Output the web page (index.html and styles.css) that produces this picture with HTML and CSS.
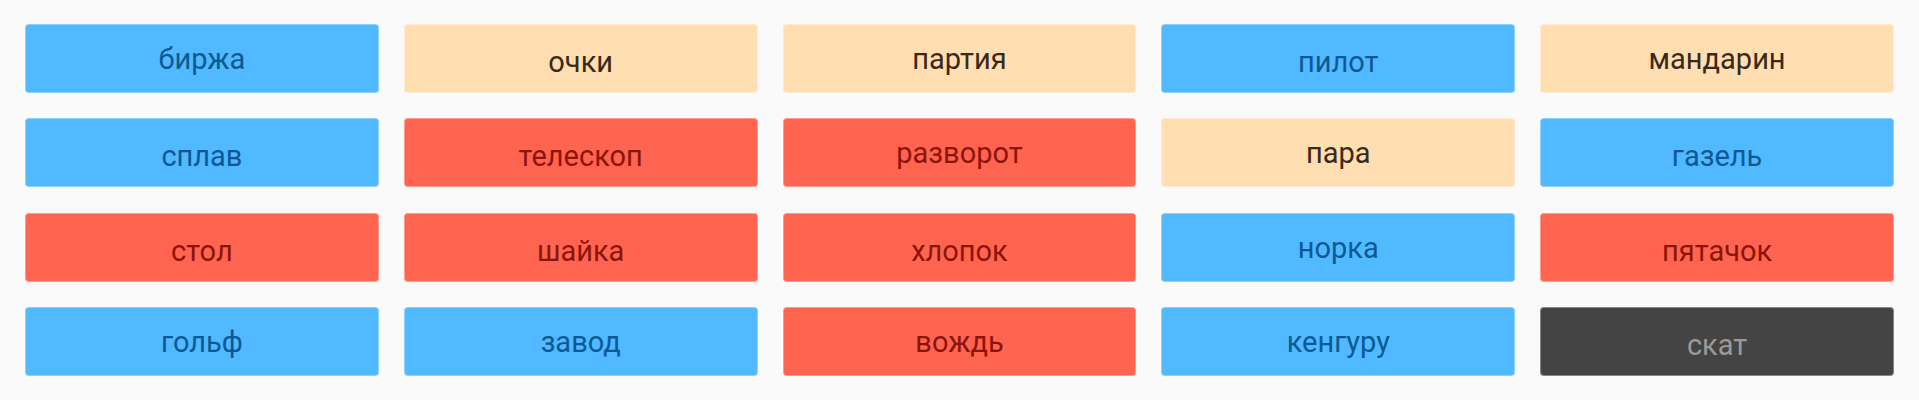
FILE: index.html
```html
<!DOCTYPE html>
<html lang="ru">
<head>
<meta charset="utf-8">
<title>Карточки</title>
<link rel="stylesheet" href="styles.css">
</head>
<body>
<main class="board">
  <div class="card blue d">биржа</div>
  <div class="card beige">очки</div>
  <div class="card beige d">партия</div>
  <div class="card blue">пилот</div>
  <div class="card beige d">мандарин</div>

  <div class="card blue">сплав</div>
  <div class="card red">телескоп</div>
  <div class="card red d">разворот</div>
  <div class="card beige d">пара</div>
  <div class="card blue">газель</div>

  <div class="card red">стол</div>
  <div class="card red">шайка</div>
  <div class="card red">хлопок</div>
  <div class="card blue d">норка</div>
  <div class="card red">пятачок</div>

  <div class="card blue d">гольф</div>
  <div class="card blue d">завод</div>
  <div class="card red d">вождь</div>
  <div class="card blue d">кенгуру</div>
  <div class="card dark">скат</div>
</main>
</body>
</html>
```
FILE: styles.css
```css
html, body {
  margin: 0;
  padding: 0;
  background: #fafafa;
}

body {
  font-family: Roboto, "Liberation Sans", sans-serif;
}

.board {
  display: grid;
  grid-template-columns: repeat(5, 1fr);
  grid-auto-rows: 69px;
  column-gap: 25px;
  row-gap: 25.3px;
  padding: 24px 25px;
}

.card {
  box-sizing: border-box;
  display: flex;
  align-items: center;
  justify-content: center;
  border-radius: 4px;
  border: 1px solid rgba(255, 255, 255, 0.35);
  font-size: 29px;
  line-height: 32px;
  padding-top: 7px;
}

.card.d {
  padding-top: 1px;
}

.blue {
  background: #50b9ff;
  color: #0c5a95;
}

.beige {
  background: #ffdfb1;
  color: #3a2818;
}

.red {
  background: #ff6450;
  color: #8c1409;
}

.dark {
  background: #444444;
  color: #9a9a9a;
}
```
